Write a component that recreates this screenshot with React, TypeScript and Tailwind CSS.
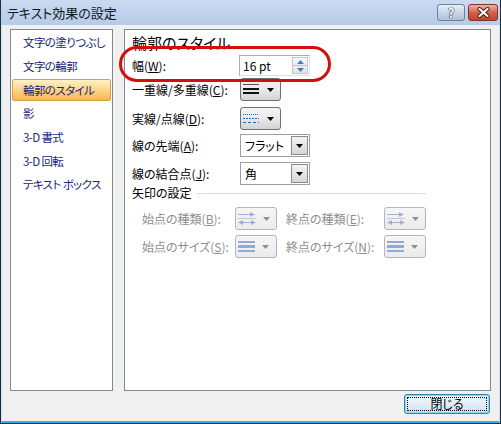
import React from "react";

function Key({ k }: { k: string }) {
  return <span className="underline underline-offset-[1px]">{k}</span>;
}

function Caret({ color = "#000" }: { color?: string }) {
  return (
    <svg width="7" height="4" viewBox="0 0 7 4">
      <polygon points="0,0 7,0 3.5,4" fill={color} />
    </svg>
  );
}

function CompoundIcon() {
  return (
    <svg width="16" height="11" viewBox="0 0 16 11">
      <rect x="0" y="0" width="16" height="1" fill="#555" />
      <rect x="0" y="4" width="16" height="2" fill="#111" />
      <rect x="0" y="8" width="16" height="2" fill="#111" />
    </svg>
  );
}

function DashIcon() {
  return (
    <svg width="16" height="11" viewBox="0 0 16 11">
      <line x1="0" y1="1.5" x2="16" y2="1.5" stroke="#2f63c4" strokeWidth="1" strokeDasharray="1 1" />
      <line x1="0" y1="5.5" x2="16" y2="5.5" stroke="#2f63c4" strokeWidth="1" strokeDasharray="2 1" />
      <line x1="0" y1="9.5" x2="16" y2="9.5" stroke="#2f63c4" strokeWidth="1" strokeDasharray="3 2" />
    </svg>
  );
}

function ArrowIcon() {
  return (
    <svg width="18" height="15" viewBox="0 0 18 15">
      <line x1="0" y1="3.5" x2="16" y2="3.5" stroke="#9cb2d6" strokeWidth="1" />
      <polygon points="12,1 17,3.5 12,6" fill="#9cb2d6" />
      <line x1="0" y1="7.5" x2="18" y2="7.5" stroke="#c8c8c8" strokeWidth="1" />
      <line x1="2" y1="11.5" x2="16" y2="11.5" stroke="#9cb2d6" strokeWidth="1" />
      <polygon points="5,9 0,11.5 5,14" fill="#9cb2d6" />
      <polygon points="13,9 18,11.5 13,14" fill="#9cb2d6" />
    </svg>
  );
}

function SizeIcon() {
  return (
    <svg width="17" height="11" viewBox="0 0 17 11">
      <rect x="0" y="0" width="17" height="2" fill="#93abd3" />
      <rect x="0" y="4" width="17" height="3" fill="#93abd3" />
      <rect x="0" y="9" width="17" height="2" fill="#93abd3" />
    </svg>
  );
}

function StyleButton({ children }: { children: React.ReactNode }) {
  return (
    <div className="w-[41px] h-[23px] rounded-[3px] border border-[#707070] bg-linear-to-b from-[#f4f4f4] via-[#e9e9e9] to-[#d3d3d3] flex items-center pl-[2px] gap-[8px]">
      {children}
      <Caret />
    </div>
  );
}

function DisabledButton({ children }: { children: React.ReactNode }) {
  return (
    <div className="w-[42px] h-[23px] rounded-[3px] border border-[#b3b6b9] bg-linear-to-b from-[#f6f6f6] to-[#ebebeb] flex items-center pl-[2px] gap-[7px]">
      {children}
      <Caret color="#8f8f8f" />
    </div>
  );
}

function Combo({ value }: { value: string }) {
  return (
    <div className="w-[70px] h-[23px] border border-[#9aa0a8] bg-white flex items-center pl-[4px]">
      <span className="text-[12px]">{value}</span>
      <div className="ml-auto mr-px w-[17px] h-[19px] border border-[#8b8b8b] bg-linear-to-b from-[#f4f4f4] to-[#d6d6d6] flex items-center justify-center">
        <Caret />
      </div>
    </div>
  );
}

const items = [
  "文字の塗りつぶし",
  "文字の輪郭",
  "輪郭のスタイル",
  "影",
  "3-D 書式",
  "3-D 回転",
  "テキスト ボックス",
];

export default function App() {
  return (
    <div className="relative w-[501px] h-[424px] flex flex-col bg-[#f0f0f0] border-x border-b border-[#1f2d3c] font-['Noto_Sans_CJK_JP',sans-serif] [font-feature-settings:'palt'] text-black select-none">
      {/* title bar */}
      <div className="h-[25px] flex items-start bg-linear-to-b from-[#cadbf0] to-[#b6cbe7]">
        <span className="pl-[6px] pt-[4px] text-[13px] leading-[18px] text-[#101820]">テキスト効果の設定</span>
        <div className="ml-auto pt-[4px] pr-[2px] flex gap-[3px]">
          <div className="w-[28px] h-[17px] rounded-[3px] border border-[#6c819c] bg-linear-to-b from-[#e6eef8] via-[#c9d8ec] to-[#aebfd8] flex items-center justify-center">
            <span className="text-[13px] leading-none font-bold text-white [text-shadow:0_0_1px_#1c2b40,0_0_1px_#1c2b40,0_0_1px_#1c2b40]">?</span>
          </div>
          <div className="w-[30px] h-[17px] rounded-[3px] border border-[#7c3328] bg-linear-to-b from-[#eab3a5] via-[#d6624b] to-[#c4432c] flex items-center justify-center">
            <svg width="13" height="11" viewBox="0 0 13 11">
              <path d="M2.5 2 L10.5 9 M10.5 2 L2.5 9" stroke="#4a1810" strokeWidth="4" strokeLinecap="round" />
              <path d="M2.5 2 L10.5 9 M10.5 2 L2.5 9" stroke="#fff" strokeWidth="2.2" strokeLinecap="round" />
            </svg>
          </div>
        </div>
      </div>

      {/* client */}
      <div className="flex-1 flex flex-col border-l border-r border-b-2 border-l-[#c5e4f4] border-r-[#c5e4f4] border-b-[#3aace0] px-[8px] pt-[4px]">
        <div className="flex gap-[11px] h-[362px]">
          {/* category list */}
          <div className="w-[103px] bg-white border border-[#828790] flex flex-col pt-[2px] gap-[1.67px]">
            {items.map((it, i) => (
              <div
                key={it}
                className={`h-[22px] mx-px pl-[10px] flex items-center text-[11.5px] tracking-[-0.6px] whitespace-nowrap text-[#15287a] rounded-[2px] border ${
                  i === 2
                    ? "border-[#dba244] bg-linear-to-b from-[#fff1c8] via-[#fdd486] to-[#fbb451]"
                    : "border-transparent"
                }`}
              >
                {it}
              </div>
            ))}
          </div>

          {/* settings */}
          <div className="flex-1 bg-white border border-[#828790] pl-[7px] flex flex-col text-[12px] whitespace-nowrap">
            <div className="mt-[4px] h-[18px] text-[15px] leading-[18px]">輪郭のスタイル</div>

            <div className="mt-[3px] h-[21px] flex items-center">
              <span className="w-[107px]">
                幅(<Key k="W" />):
              </span>
              <div className="w-[71px] h-[21px] border border-[#abadb3] border-b-[#dfe3e8] border-r-[#dfe3e8] bg-white flex items-center pl-[3px]">
                <span>16 pt</span>
                <div className="ml-auto mr-px w-[16px] h-[17px] flex flex-col border border-[#c3c7cc] bg-linear-to-b from-[#f7f7f7] to-[#e4e4e4]">
                  <div className="flex-1 flex items-center justify-center border-b border-[#c3c7cc]">
                    <svg width="7" height="4" viewBox="0 0 7 4">
                      <polygon points="0,4 7,4 3.5,0" fill="#4b7cc3" />
                    </svg>
                  </div>
                  <div className="flex-1 flex items-center justify-center">
                    <svg width="7" height="4" viewBox="0 0 7 4">
                      <polygon points="0,0 7,0 3.5,4" fill="#4b7cc3" />
                    </svg>
                  </div>
                </div>
              </div>
            </div>

            <div className="mt-[2px] h-[23px] flex items-center">
              <span className="w-[108px]">
                一重線/多重線(<Key k="C" />):
              </span>
              <StyleButton>
                <CompoundIcon />
              </StyleButton>
            </div>

            <div className="mt-[6px] h-[23px] flex items-center">
              <span className="w-[108px]">
                実線/点線(<Key k="D" />):
              </span>
              <StyleButton>
                <DashIcon />
              </StyleButton>
            </div>

            <div className="mt-[4px] h-[23px] flex items-center">
              <span className="w-[108px]">
                線の先端(<Key k="A" />):
              </span>
              <Combo value="フラット" />
            </div>

            <div className="mt-[5px] h-[23px] flex items-center">
              <span className="w-[108px]">
                線の結合点(<Key k="J" />):
              </span>
              <Combo value="角" />
            </div>

            <div className="mt-px h-[14px] flex items-center">
              <span>矢印の設定</span>
              <div className="flex-1 ml-[5px] mr-[64px] h-px bg-[#d5dde3]" />
            </div>

            <div className="mt-[7px] h-[23px] flex items-center pl-[10px] text-[#8d8d8d]">
              <span className="w-[93px]">
                始点の種類(<Key k="B" />):
              </span>
              <DisabledButton>
                <ArrowIcon />
              </DisabledButton>
              <span className="ml-[9px] w-[98px]">
                終点の種類(<Key k="E" />):
              </span>
              <DisabledButton>
                <ArrowIcon />
              </DisabledButton>
            </div>

            <div className="mt-[5px] h-[23px] flex items-center pl-[10px] text-[#8d8d8d]">
              <span className="w-[93px]">
                始点のサイズ(<Key k="S" />):
              </span>
              <DisabledButton>
                <SizeIcon />
              </DisabledButton>
              <span className="ml-[9px] w-[98px]">
                終点のサイズ(<Key k="N" />):
              </span>
              <DisabledButton>
                <SizeIcon />
              </DisabledButton>
            </div>
          </div>
        </div>

        <div className="mt-[3px] flex justify-end">
          <div className="mr-px w-[86px] h-[20px] rounded-[3px] border border-[#3c7fb1] bg-linear-to-b from-[#eef7fc] via-[#e3eef6] to-[#cddfeb] shadow-[inset_0_0_0_1px_#7fd8f8] flex items-center justify-center outline outline-1 outline-dotted outline-black outline-offset-[-4px]">
            <span className="text-[12px] leading-none">閉じる</span>
          </div>
        </div>
      </div>

      {/* red highlight ring */}
      <div className="absolute left-[118px] top-[46px] w-[212px] h-[36px] rounded-[18px] border-[3px] border-[#d10f0f] pointer-events-none" />
    </div>
  );
}
